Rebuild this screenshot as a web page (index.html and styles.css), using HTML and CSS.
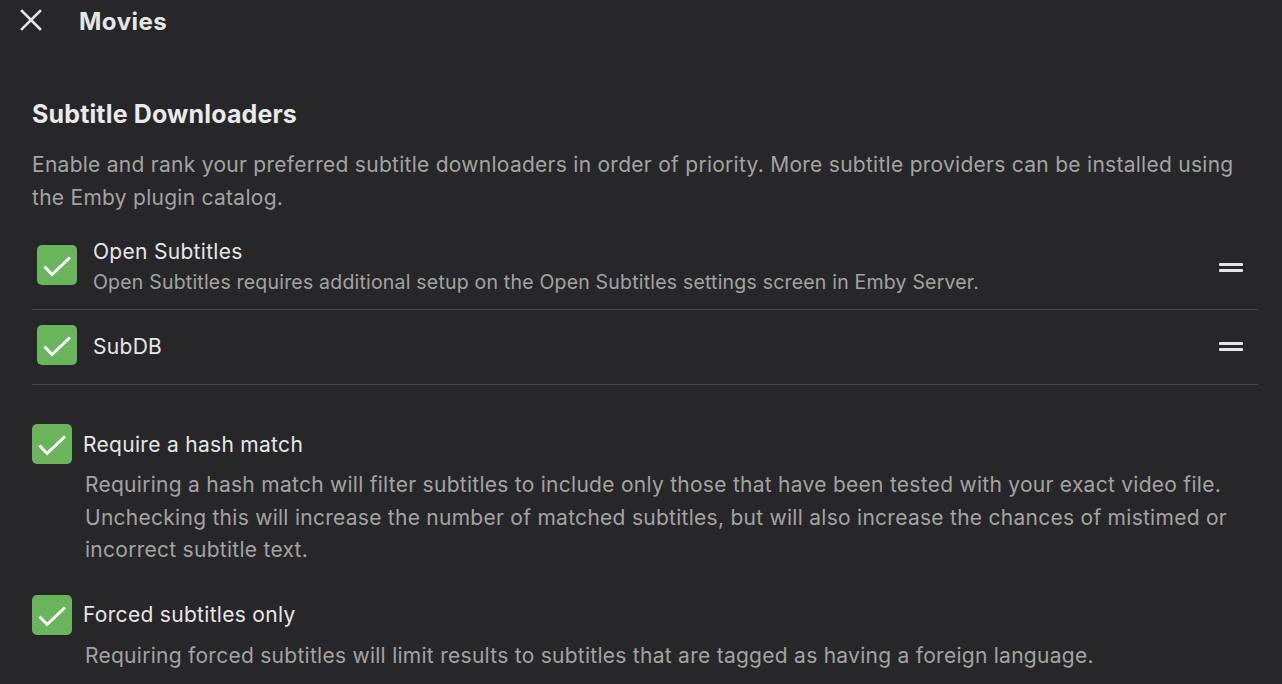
FILE: index.html
```html
<!DOCTYPE html>
<html>
<head>
<meta charset="utf-8">
<link rel="stylesheet" href="styles.css">
</head>
<body>
<header class="topbar">
  <button class="close-btn" aria-label="Close">
    <svg width="22" height="22" viewBox="0 0 22 22"><path d="M2 2 L20 20 M20 2 L2 20" stroke="#e6e6e6" stroke-width="2.6" stroke-linecap="square" fill="none"/></svg>
  </button>
  <h1 class="title">Movies</h1>
</header>
<main class="content">
  <h2 class="section-title">Subtitle Downloaders</h2>
  <p class="section-desc">Enable and rank your preferred subtitle downloaders in order of priority. More subtitle providers can be installed using the Emby plugin catalog.</p>
  <ul class="provider-list">
    <li class="provider">
      <span class="check"><svg viewBox="0 0 40 40" width="40" height="40"><path d="M7.5 21.5 L15 29.5 L33 12.5" stroke="#fff" stroke-width="3" fill="none"/></svg></span>
      <div class="provider-text">
        <div class="provider-name">Open Subtitles</div>
        <div class="provider-sub">Open Subtitles requires additional setup on the Open Subtitles settings screen in Emby Server.</div>
      </div>
      <span class="drag"><i></i><i></i></span>
    </li>
    <li class="provider single">
      <span class="check"><svg viewBox="0 0 40 40" width="40" height="40"><path d="M7.5 21.5 L15 29.5 L33 12.5" stroke="#fff" stroke-width="3" fill="none"/></svg></span>
      <div class="provider-text">
        <div class="provider-name">SubDB</div>
      </div>
      <span class="drag"><i></i><i></i></span>
    </li>
  </ul>
  <div class="option">
    <label class="option-row">
      <span class="check"><svg viewBox="0 0 40 40" width="40" height="40"><path d="M7.5 21.5 L15 29.5 L33 12.5" stroke="#fff" stroke-width="3" fill="none"/></svg></span>
      <span class="option-label">Require a hash match</span>
    </label>
    <p class="option-desc">Requiring a hash match will filter subtitles to include only those that have been tested with your exact video file. Unchecking this will increase the number of matched subtitles, but will also increase the chances of mistimed or incorrect subtitle text.</p>
  </div>
  <div class="option">
    <label class="option-row">
      <span class="check"><svg viewBox="0 0 40 40" width="40" height="40"><path d="M7.5 21.5 L15 29.5 L33 12.5" stroke="#fff" stroke-width="3" fill="none"/></svg></span>
      <span class="option-label">Forced subtitles only</span>
    </label>
    <p class="option-desc">Requiring forced subtitles will limit results to subtitles that are tagged as having a foreign language.</p>
  </div>
</main>
</body>
</html>
```
FILE: styles.css
```css
* { box-sizing: border-box; }
html, body { margin: 0; padding: 0; }
body {
  background: #272729;
  color: #e6e6e6;
  font-family: Inter, "Noto Sans", sans-serif;
  width: 1282px;
  height: 684px;
  overflow: hidden;
}
.topbar {
  display: flex;
  align-items: center;
  height: 42px;
  padding-left: 20px;
}
.close-btn {
  background: none;
  border: 0;
  padding: 0;
  width: 22px;
  height: 22px;
  display: flex;
  margin-top: -2px;
}
.title {
  margin: 0 0 0 37px;
  font-size: 24px;
  letter-spacing: 0.5px;
  font-weight: 700;
  color: #e6e6e6;
}
.content {
  padding: 56px 24px 0 32px;
}
.section-title {
  margin: 0;
  font-size: 25px;
  letter-spacing: 0.15px;
  font-weight: 700;
  line-height: 32px;
  color: #eaeaea;
}
.section-desc {
  margin: 18px 0 0;
  font-size: 21px;
  letter-spacing: 0.27px;
  line-height: 33px;
  color: #a3a3a3;
}
.provider-list {
  list-style: none;
  margin: 19.5px 0 0;
  padding: 0;
}
.provider {
  display: flex;
  align-items: center;
  padding: 4px 15px 12px 5px;
  border-bottom: 1.5px solid #47474a;
  height: 76px;
}
.provider.single {
  padding: 0 15px 0 5px;
  height: 75px;
}
.provider .check {
  margin-bottom: 4px;
}
.check {
  width: 40px;
  height: 40px;
  border-radius: 5px;
  background: #6ab45c;
  flex: none;
  display: flex;
}
.provider-text {
  flex: 1;
  margin-left: 16px;
}
.provider-name {
  font-size: 21px;
  letter-spacing: 0.3px;
  line-height: 30px;
  color: #e6e6e6;
}
.provider-sub {
  font-size: 19.5px;
  letter-spacing: 0.2px;
  line-height: 30px;
  color: #a3a3a3;
}
.drag {
  width: 24px;
  display: flex;
  flex-direction: column;
  gap: 3px;
}
.drag i {
  display: block;
  height: 3px;
  background: #e6e6e6;
  border-radius: 1px;
}
.option {
  margin-top: 39.5px;
}
.option + .option { margin-top: 28px; }
.option-row {
  display: flex;
  align-items: center;
}
.option-label {
  margin-left: 11px;
  font-size: 21px;
  letter-spacing: 0.3px;
  color: #e6e6e6;
}
.option-desc {
  margin: 5px 0 0 53px;
  font-size: 21px;
  letter-spacing: 0.27px;
  line-height: 32.5px;
  color: #a3a3a3;
}
```
